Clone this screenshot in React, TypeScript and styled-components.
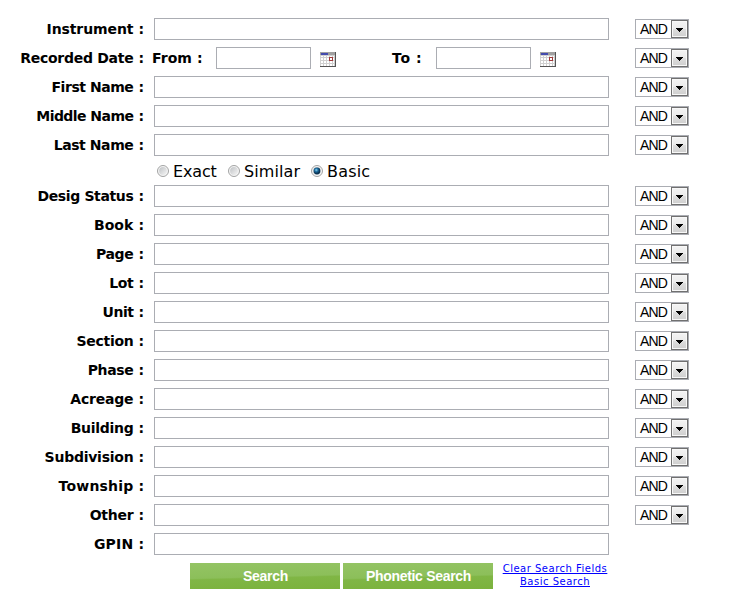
import React, { useState } from "react";
import styled, { createGlobalStyle } from "styled-components";

const GlobalStyle = createGlobalStyle`
  * { box-sizing: border-box; }
  body { margin: 0; background: #fff; color: #000; font-family: "DejaVu Sans", Verdana, sans-serif; }
`;

const Form = styled.form`
  width: 750px;
  height: 612px;
  padding-top: 18px;
  overflow: hidden;
`;

const Row = styled.div`
  display: grid;
  grid-template-columns: 145px 455px 54px;
  column-gap: 9px;
  height: 22px;
  margin-bottom: 7px;

  & > :nth-child(3) { margin-left: 17px; }
`;

const Label = styled.label`
  display: flex;
  justify-content: flex-end;
  gap: 5px;
  padding-right: 1px;
  font-size: 14px;
  font-weight: bold;
  line-height: 22px;
  white-space: nowrap;
`;

const DateLabel = styled(Label)`
  justify-content: flex-start;
`;

const LabelName = styled.span<{ $tracking: number }>`
  letter-spacing: ${(p) => p.$tracking}px;
`;

const TextInput = styled.input<{ $width: number }>`
  width: ${(p) => p.$width}px;
  height: 22px;
  padding: 1px 3px;
  border: 1px solid #abadb3;
  border-radius: 0;
  background: #fff;
  outline: none;
`;

const DateFields = styled.div`
  display: grid;
  grid-template-columns: 64px 95px 81px 44px 95px 25px;
  margin-left: -2px;

  & > svg { margin: 5px 0 0 9px; }
`;

const Combo = styled.button`
  display: flex;
  width: 54px;
  height: 20px;
  margin-top: 1px;
  padding: 0;
  border: 1px solid #abadb3;
  background: #fff;
  color: #000;
`;

const ComboText = styled.span`
  flex: 1;
  padding-left: 4px;
  font: 14px/18px "Liberation Sans", Arial, sans-serif;
  letter-spacing: -0.9px;
  text-align: left;
`;

const ComboArrow = styled.span`
  width: 17px;
  height: 18px;
  border: 1px solid #707070;
  background: linear-gradient(#f3f3f3, #ebebeb 48%, #dddddd 52%, #cfcfcf);
  box-shadow: inset 0 0 0 1px #f8f8f8;

  svg { display: block; margin: 7px 0 0 4px; }
`;

const RadioRow = styled.div`
  display: flex;
  height: 22px;
  margin-left: 157px;
`;

const RadioLabel = styled.label<{ $width: number; $tracking: number }>`
  display: flex;
  gap: 4px;
  width: ${(p) => p.$width}px;
  font-size: 16px;
  line-height: 17px;
  letter-spacing: ${(p) => p.$tracking}px;
  white-space: nowrap;

  svg { flex: none; margin-top: 2px; }
`;

const Actions = styled.div`
  display: flex;
  gap: 3px;
  margin-left: 190px;
  padding-top: 1px;
`;

const ActionButton = styled.button`
  width: 150px;
  height: 26px;
  padding: 1px 0 0 1px;
  border: 0;
  background: linear-gradient(178.5deg, #94c464, #8cbf5a 52%, #80b645 57%, #7bb23d);
  color: #fff;
  font: bold 14px/25px "Liberation Sans", Arial, sans-serif;
  letter-spacing: -0.3px;
`;

const Links = styled.div`
  display: flex;
  flex-direction: column;
  align-items: center;
  width: 106px;
  margin: -1px 0 0 6px;
  white-space: nowrap;
`;

const Link = styled.a`
  color: #0000ff;
  font-size: 10px;
  line-height: 13px;
  letter-spacing: 0.5px;
  text-decoration: underline;
`;

const CalendarIcon = () => (
  <svg width="16" height="15" viewBox="0 0 16 15" shapeRendering="crispEdges">
    <path fill="#d0d0d0" d="M0 0h16v15H0z" />
    <path fill="#a0a0a0" d="M0 0h15v3H0z" />
    <path fill="#444cae" d="M1 1h7v2H1z" />
    <path
      fill="#fff"
      d="M1 4h2v1H1zM4 4h2v1H4zM7 4h2v1H7zM10 4h2v1h-2zM13 4h1v1h-1zM1 6h2v2H1zM4 6h2v2H4zM7 6h2v2H7zM13 6h1v2h-1zM1 9h2v2H1zM4 9h2v2H4zM7 9h2v2H7zM10 9h2v2h-2zM13 9h1v2h-1zM1 12h2v2H1zM4 12h2v2H4zM7 12h2v2H7zM10 12h2v2h-2zM13 12h1v2h-1z"
    />
    <path fill="#a03c3c" d="M9 5h4v4H9z" />
    <path fill="#fff" d="M10 6h2v2h-2z" />
    <path fill="#555" d="M15 0h1v15H0v-1h15z" />
  </svg>
);

const RadioIcon = ({ checked }: { checked: boolean }) => (
  <svg width="12" height="12" viewBox="0 0 12 12">
    <defs>
      <linearGradient id="radioFace" x2="1" y2="1">
        <stop offset="0" stopColor="#bfc2c5" />
        <stop offset="1" stopColor="#f5f5f5" />
      </linearGradient>
      <radialGradient id="radioDot" cx="0.4" cy="0.35">
        <stop offset="0" stopColor="#8fd5f2" />
        <stop offset="0.5" stopColor="#1c6c9e" />
        <stop offset="1" stopColor="#0b3453" />
      </radialGradient>
    </defs>
    <circle cx="6" cy="6" r="5.5" fill="#f5f5f5" stroke="#a2a3a3" />
    <circle cx="6" cy="6" r="3.9" fill="url(#radioFace)" />
    {checked && <circle cx="6" cy="6" r="3.4" fill="url(#radioDot)" />}
  </svg>
);

const Operator = () => (
  <Combo type="button">
    <ComboText>AND</ComboText>
    <ComboArrow>
      <svg width="7" height="4" viewBox="0 0 7 4" shapeRendering="crispEdges">
        <path d="M0 0h7v1H6v1H5v1H4v1H3V3H2V2H1V1H0z" />
      </svg>
    </ComboArrow>
  </Combo>
);

type FieldProps = { name: string; tracking: number; operator?: boolean };

const Field = ({ name, tracking, operator = true }: FieldProps) => (
  <Row>
    <Label>
      <LabelName $tracking={tracking}>{name}</LabelName>
      <span>:</span>
    </Label>
    <TextInput $width={455} aria-label={name} />
    {operator && <Operator />}
  </Row>
);

const nameFields: FieldProps[] = [
  { name: "First Name", tracking: -0.45 },
  { name: "Middle Name", tracking: -0.55 },
  { name: "Last Name", tracking: -0.42 },
];

const propertyFields: FieldProps[] = [
  { name: "Desig Status", tracking: -0.37 },
  { name: "Book", tracking: 0.05 },
  { name: "Page", tracking: -0.35 },
  { name: "Lot", tracking: -0.4 },
  { name: "Unit", tracking: -0.5 },
  { name: "Section", tracking: -0.3 },
  { name: "Phase", tracking: -0.35 },
  { name: "Acreage", tracking: -0.2 },
  { name: "Building", tracking: -0.3 },
  { name: "Subdivision", tracking: -0.25 },
  { name: "Township", tracking: 0.18 },
  { name: "Other", tracking: -0.25 },
  { name: "GPIN", tracking: 0.2, operator: false },
];

const matches = [
  { name: "Exact", width: 71, tracking: -0.15 },
  { name: "Similar", width: 83, tracking: 0.1 },
  { name: "Basic", width: 70, tracking: 0.2 },
];

export default function App() {
  const [match, setMatch] = useState("Basic");
  return (
    <>
      <GlobalStyle />
      <Form>
        <Field name="Instrument" tracking={-0.1} />
        <Row>
          <Label>
            <LabelName $tracking={-0.28}>Recorded Date</LabelName>
            <span>:</span>
          </Label>
          <DateFields>
            <DateLabel>
              <LabelName $tracking={0.05}>From</LabelName>
              <span>:</span>
            </DateLabel>
            <TextInput $width={95} aria-label="From" />
            <CalendarIcon />
            <DateLabel>
              <LabelName $tracking={0.9}>To</LabelName>
              <span>:</span>
            </DateLabel>
            <TextInput $width={95} aria-label="To" />
            <CalendarIcon />
          </DateFields>
          <Operator />
        </Row>
        {nameFields.map((field) => (
          <Field key={field.name} {...field} />
        ))}
        <RadioRow>
          {matches.map((m) => (
            <RadioLabel
              key={m.name}
              $width={m.width}
              $tracking={m.tracking}
              onClick={() => setMatch(m.name)}
            >
              <RadioIcon checked={match === m.name} />
              {m.name}
            </RadioLabel>
          ))}
        </RadioRow>
        {propertyFields.map((field) => (
          <Field key={field.name} {...field} />
        ))}
        <Actions>
          <ActionButton type="button">Search</ActionButton>
          <ActionButton type="button">Phonetic Search</ActionButton>
          <Links>
            <Link href="#">Clear Search Fields</Link>
            <Link href="#">Basic Search</Link>
          </Links>
        </Actions>
      </Form>
    </>
  );
}
